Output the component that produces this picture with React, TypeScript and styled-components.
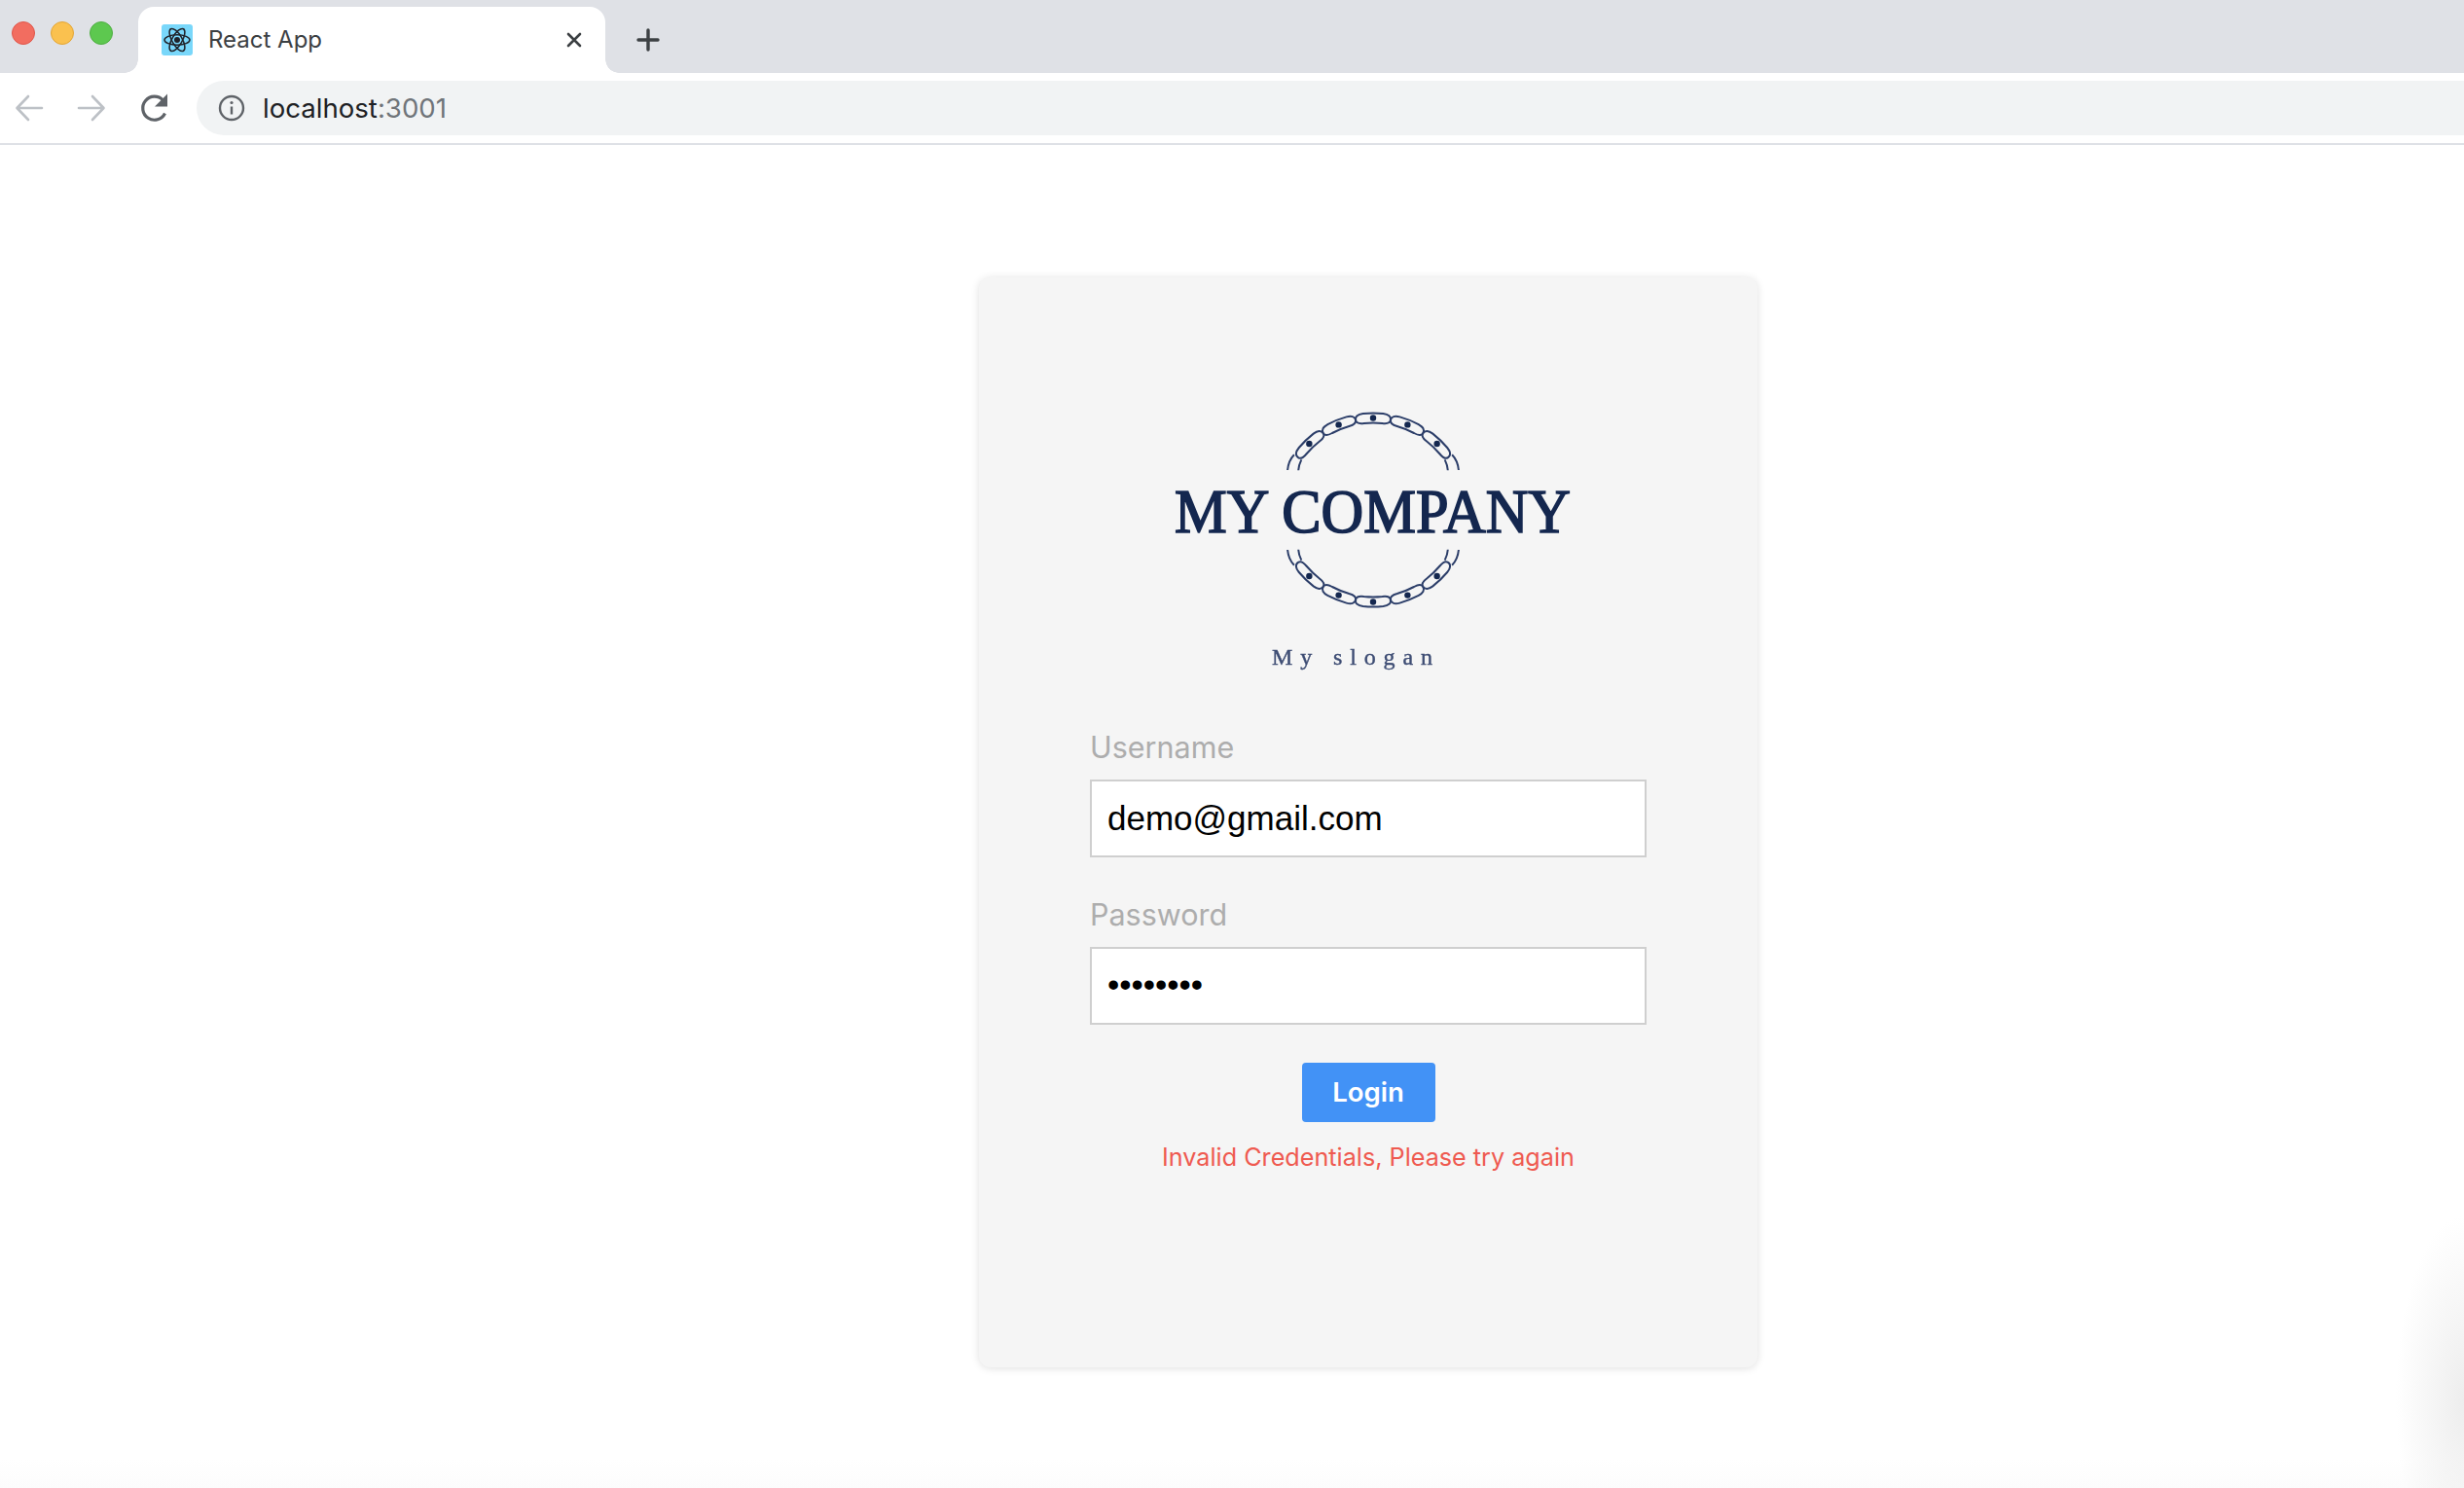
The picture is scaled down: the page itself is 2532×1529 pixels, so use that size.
import React from 'react';
import styled, { createGlobalStyle } from 'styled-components';

const GlobalStyle = createGlobalStyle`
  html, body {
    margin: 0;
    padding: 0;
    background: #ffffff;
    font-family: "Inter", "Liberation Sans", sans-serif;
  }
  * { box-sizing: border-box; }
`;

const Page = styled.div`
  width: 2532px;
  height: 1529px;
  display: flex;
  flex-direction: column;
  overflow: hidden;
`;

const TabStrip = styled.div`
  height: 75px;
  flex: none;
  background: #dfe1e6;
  display: flex;
  align-items: flex-start;
`;

const Lights = styled.div`
  width: 142px;
  flex: none;
  padding: 22px 0 0 12px;
  display: flex;
  gap: 16px;
`;

const Light = styled.span<{ $fill: string; $edge: string }>`
  width: 24px;
  height: 24px;
  border-radius: 50%;
  background: ${(p) => p.$fill};
  border: 1px solid ${(p) => p.$edge};
`;

const Tab = styled.div`
  position: relative;
  margin-top: 7px;
  width: 480px;
  height: 68px;
  background: #ffffff;
  border-radius: 16px 16px 0 0;
  display: flex;
  align-items: center;
  padding: 0 24px 0 24px;

  &::before,
  &::after {
    content: '';
    position: absolute;
    bottom: 0;
    width: 14px;
    height: 14px;
    background: radial-gradient(circle at var(--cx) 0, #dfe1e6 13.5px, #ffffff 14px);
  }
  &::before { left: -14px; --cx: 0; }
  &::after { right: -14px; --cx: 100%; }
`;

const Favicon = styled.svg`
  width: 32px;
  height: 32px;
  flex: none;
  border-radius: 3px;
  background: #79d7fa;
`;

const TabTitle = styled.span`
  margin-left: 16px;
  flex: 1;
  font-size: 24px;
  margin-top: -2px;
  color: #3c4043;
`;

const PlusButton = styled.svg`
  width: 24px;
  height: 24px;
  margin: 29px 0 0 32px;
  flex: none;
`;

const Toolbar = styled.div`
  height: 74px;
  flex: none;
  background: #ffffff;
  border-bottom: 2px solid #dee1e6;
  display: flex;
  align-items: flex-start;
  padding-top: 8px;
`;

const NavIcon = styled.svg`
  width: 32px;
  height: 32px;
  flex: none;
  margin-top: 12px;
  margin-left: 14px;
  & + & { margin-left: 32px; }
`;

const ReloadIcon = styled(NavIcon)`
  && {
    margin-left: 33px;
    margin-right: -1px;
  }
`;

const AddressBar = styled.div`
  flex: 1;
  height: 56px;
  margin-left: 28px;
  background: #f1f3f4;
  border-radius: 28px 0 0 28px;
  display: flex;
  align-items: center;
  padding-left: 22px;
`;

const InfoIcon = styled.svg`
  width: 28px;
  height: 28px;
  flex: none;
`;

const Url = styled.span`
  margin-left: 18px;
  font-size: 27.6px;
  color: #202124;
`;

const UrlPort = styled.span`
  color: #70757a;
`;

const Main = styled.main`
  flex: 1;
  padding: 136px 0 0 1006px;
  background:
    radial-gradient(ellipse 70px 190px at 100% 1290px, #ededed, rgba(255, 255, 255, 0)),
    linear-gradient(to top, #fcfcfc, #ffffff 30px);
`;

const Card = styled.section`
  width: 800px;
  height: 1120px;
  padding: 130px 114px 0 114px;
  background: #f5f5f5;
  border-radius: 12px;
  box-shadow: 0 1px 9px rgba(0, 0, 0, 0.13);
  display: flex;
  flex-direction: column;
`;

const Logo = styled.svg`
  display: block;
  width: 572px;
  height: 285px;
  flex: none;
  margin-bottom: 48px;
  filter: blur(0.6px);
`;

const Field = styled.label`
  display: flex;
  flex-direction: column;
  gap: 13px;
  margin-bottom: 39px;
`;

const FieldLabel = styled.span`
  font-size: 30.5px;
  line-height: 40px;
  color: #adadad;
`;

const TextInput = styled.input`
  width: 100%;
  height: 80px;
  padding: 0 16px;
  border: 2px solid #cfcfcf;
  border-radius: 0;
  background: #ffffff;
  color: #000000;
  font-family: "Liberation Sans", Arial, sans-serif;
  font-size: 35px;
  outline: none;

  &[type='password'] { padding-bottom: 3px; }
`;

const LoginButton = styled.button`
  align-self: center;
  width: 137px;
  height: 61px;
  border: none;
  border-radius: 4px;
  background: #4292f6;
  color: #ffffff;
  font-family: inherit;
  font-size: 27.5px;
  font-weight: 600;
  padding: 0 0 1px;
`;

const ErrorText = styled.p`
  margin: 16px 0 0;
  text-align: center;
  font-size: 25.2px;
  line-height: 40px;
  color: #ef5a50;
`;

const NAVY = '#14274f';
const CX = 1411;
const CY = 524;

const point = (deg: number, r: number, flip: boolean): [number, number] => {
  const a = (deg * Math.PI) / 180;
  const y = r * Math.cos(a);
  return [CX + r * Math.sin(a), flip ? CY + y : CY - y];
};

const polar = (deg: number, r: number, flip: boolean) =>
  point(deg, r, flip)
    .map((v) => v.toFixed(1))
    .join(' ');

// stadium-shaped link bent along the ring, c is its centre angle
const linkPath = (c: number, flip: boolean) => {
  const p = (deg: number, r: number) => polar(c + deg, r, flip);
  const out = flip ? 0 : 1;
  const back = flip ? 1 : 0;
  return [
    `M${p(-11, 94)}`,
    `C${p(-11, 98)} ${p(-9, 99.5)} ${p(-6, 99.5)}`,
    `A99.5 99.5 0 0 ${out} ${p(6, 99.5)}`,
    `C${p(9, 99.5)} ${p(11, 98)} ${p(11, 94)}`,
    `C${p(11, 91)} ${p(9, 89.5)} ${p(6, 89.5)}`,
    `A89.5 89.5 0 0 ${back} ${p(-6, 89.5)}`,
    `C${p(-9, 89.5)} ${p(-11, 91)} ${p(-11, 94)}Z`,
  ].join(' ');
};

// one half of the chain ring: studded links with open tails at both ends
const ChainArc = ({ flip }: { flip: boolean }) => {
  const centers = [-44, -22, 0, 22, 44];
  return (
    <g fill="none" stroke="#2c3e69" strokeWidth={2}>
      {centers.map((c) => {
        const [dotX, dotY] = point(c, 94.5, flip);
        return (
          <g key={c}>
            <path d={linkPath(c, flip)} />
            <circle cx={dotX} cy={dotY} r={3.2} fill={NAVY} stroke="none" />
          </g>
        );
      })}
      {[-1, 1].map((s) => (
        <g key={s}>
          <path d={`M${polar(s * 55, 99, flip)} C${polar(s * 58, 100, flip)} ${polar(s * 62, 99, flip)} ${polar(s * 65, 97, flip)}`} />
          <path d={`M${polar(s * 55, 90, flip)} C${polar(s * 57, 89.5, flip)} ${polar(s * 60, 88.5, flip)} ${polar(s * 62, 87, flip)}`} />
        </g>
      ))}
    </g>
  );
};

const App = () => {
  return (
    <Page>
      <GlobalStyle />
      <TabStrip>
        <Lights>
          <Light $fill="#f26d60" $edge="#e0564a" />
          <Light $fill="#fac14f" $edge="#e3a535" />
          <Light $fill="#5dc84f" $edge="#4eae41" />
        </Lights>
        <Tab>
          <Favicon viewBox="0 0 32 32" fill="none" stroke="#20232a" strokeWidth={1.5}>
            <circle cx="16" cy="16" r="3" fill="#20232a" stroke="none" />
            <ellipse cx="16" cy="16" rx="13" ry="5.2" />
            <ellipse cx="16" cy="16" rx="13" ry="5.2" transform="rotate(60 16 16)" />
            <ellipse cx="16" cy="16" rx="13" ry="5.2" transform="rotate(120 16 16)" />
          </Favicon>
          <TabTitle>React App</TabTitle>
          <svg width="16" height="16" viewBox="0 0 16 16" stroke="#3c4043" strokeWidth={2.6} strokeLinecap="round">
            <path d="M2 2l12 12M14 2L2 14" />
          </svg>
        </Tab>
        <PlusButton viewBox="0 0 24 24" stroke="#3c4043" strokeWidth={3.4} strokeLinecap="round">
          <path d="M12 2v20M2 12h20" />
        </PlusButton>
      </TabStrip>
      <Toolbar>
        <NavIcon viewBox="0 0 32 32" fill="none" stroke="#bdc1c6" strokeWidth={2.6} strokeLinecap="round" strokeLinejoin="round">
          <path d="M29 16H4M15 4L3.5 16 15 28" />
        </NavIcon>
        <NavIcon viewBox="0 0 32 32" fill="none" stroke="#bdc1c6" strokeWidth={2.6} strokeLinecap="round" strokeLinejoin="round">
          <path d="M3 16h25M17 4l11.5 12L17 28" />
        </NavIcon>
        <ReloadIcon viewBox="0 0 32 32" fill="none" stroke="#5f6368" strokeWidth={3.2}>
          <path d="M26.5 21.5A12 12 0 1 1 24.5 8" />
          <path d="M29 1.5v13H16z" fill="#5f6368" stroke="none" />
        </ReloadIcon>
        <AddressBar>
          <InfoIcon viewBox="0 0 28 28" fill="none" stroke="#5f6368" strokeWidth={2.4}>
            <circle cx="14" cy="14" r="12" />
            <path d="M14 12.5V20.5" />
            <circle cx="14" cy="8.5" r="1.6" fill="#5f6368" stroke="none" />
          </InfoIcon>
          <Url>
            localhost<UrlPort>:3001</UrlPort>
          </Url>
        </AddressBar>
      </Toolbar>
      <Main>
        <Card>
          <Logo viewBox="1120 415 572 285">
            <ChainArc flip={false} />
            <ChainArc flip />
            <text
              x="1207"
              y="547"
              textLength={407}
              lengthAdjust="spacingAndGlyphs"
              fontFamily="'Liberation Serif', serif"
              fontSize={63}
              fill={NAVY}
              stroke={NAVY}
              strokeWidth={1.7}
            >
              MY COMPANY
            </text>
            <text
              x="1307"
              y="683"
              textLength={165}
              fontFamily="'Liberation Serif', serif"
              fontSize={24}
              fill="#3d4c73"
              stroke="#3d4c73"
              strokeWidth={0.4}
            >
              My slogan
            </text>
          </Logo>
          <Field>
            <FieldLabel>Username</FieldLabel>
            <TextInput type="text" readOnly value="demo@gmail.com" />
          </Field>
          <Field>
            <FieldLabel>Password</FieldLabel>
            <TextInput type="password" readOnly value="password" />
          </Field>
          <LoginButton type="button">Login</LoginButton>
          <ErrorText>Invalid Credentials, Please try again</ErrorText>
        </Card>
      </Main>
    </Page>
  );
};

export default App;
